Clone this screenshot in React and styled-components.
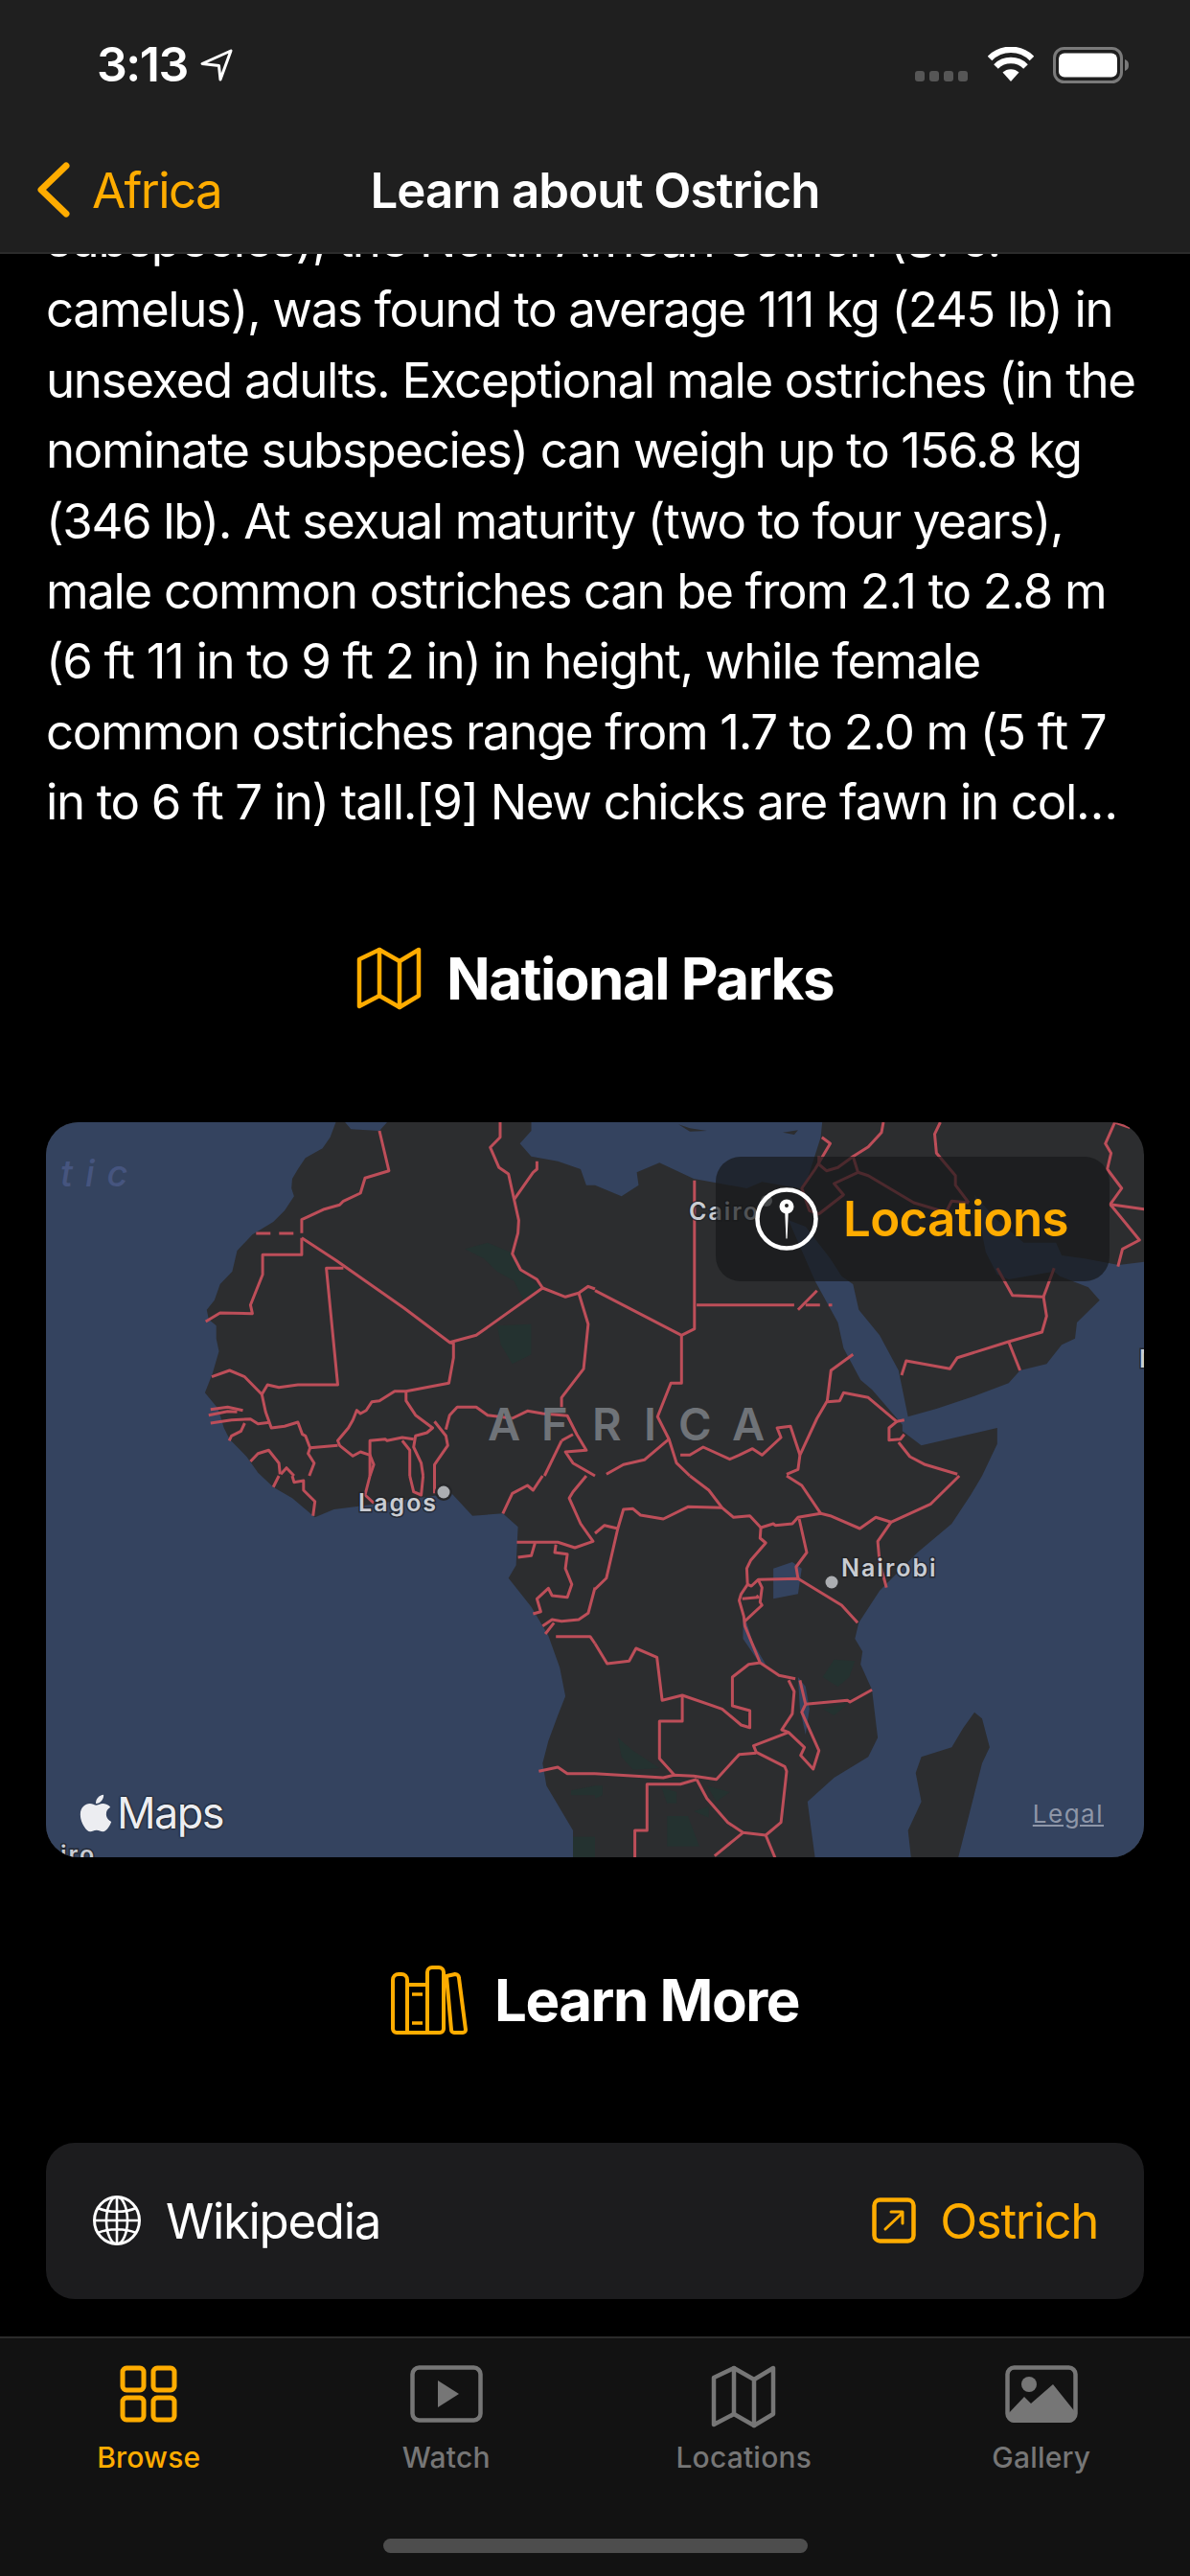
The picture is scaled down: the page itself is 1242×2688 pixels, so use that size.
import React from "react";
import styled, { createGlobalStyle } from "styled-components";
import { FaApple } from "react-icons/fa";

const ORANGE = "#ffac00";
const FONT = `Inter, "Liberation Sans", sans-serif`;

const Global = createGlobalStyle`
  html, body { margin: 0; padding: 0; background: #000; }
  * { box-sizing: border-box; }
`;

const Screen = styled.div`
  width: 1242px; height: 2688px; background: #000; color: #fff;
  font-family: ${FONT}; display: flex; flex-direction: column; overflow: hidden;
`;
const NavBar = styled.header`
  flex: 0 0 265px; background: #1f1f1f; border-bottom: 2px solid #2b2b2b;
  position: relative; z-index: 2; display: flex; flex-direction: column;
`;
const StatusBar = styled.div`
  height: 148px; padding: 49px 63px 0 101px; display: flex; justify-content: space-between; align-items: flex-start;
`;
const Clock = styled.div`
  display: flex; align-items: center; gap: 13px; font-size: 50px; line-height: 37px; font-weight: 600; letter-spacing: -1.5px;
`;
const StatusIcons = styled.div`display: flex; align-items: flex-start; gap: 20px;`;
const NavRow = styled.div`
  height: 100px; position: relative; display: flex; align-items: center; justify-content: center;
`;
const BackLink = styled.div`
  position: absolute; left: 39px; top: 0; height: 100%; display: flex; align-items: center; gap: 23px;
  color: ${ORANGE}; font-size: 51px; letter-spacing: -1.6px;
`;
const NavTitle = styled.div`font-size: 51px; font-weight: 600; letter-spacing: -1px;`;

const Scroll = styled.main`flex: 1 1 0; min-height: 0; overflow: hidden; padding: 0 48px;`;
const Article = styled.article`margin-top: -52px;`;
const Line = styled.div`
  font-size: 51px; line-height: 73.4px; white-space: nowrap; letter-spacing: -1.35px;
`;
const SectionTitle = styled.h2`
  margin: ${(p) => p.$top}px 0 0; height: 80px; display: flex; align-items: center; justify-content: center; gap: 26px;
  font-size: 60px; font-weight: 700; letter-spacing: -1.5px;
`;
const MapCard = styled.section`
  margin-top: 110px; height: 767px; border-radius: 34px; overflow: hidden; position: relative; background: #2c2d2f;
`;
const MapArt = styled.svg`display: block; width: 100%; height: 100%;`;
const Label = styled.text`
  font-family: ${FONT}; font-weight: 600; font-size: 25px; letter-spacing: 2px; fill: #c9ccd2;
  paint-order: stroke; stroke: rgba(30,32,36,.7); stroke-width: 3px;
`;
const Continent = styled.text`font-family: ${FONT}; font-weight: 600; font-size: 47px; fill: #6f7378;`;
const Oceanic = styled.text`font-family: ${FONT}; font-style: italic; font-weight: 500; font-size: 38px; letter-spacing: 13px; fill: #46557f;`;
const LocationsBadge = styled.div`
  position: absolute; left: 699px; top: 36px; width: 411px; height: 130px; border-radius: 26px;
  background: rgba(22,23,25,.68); display: flex; align-items: center; gap: 26px; padding-left: 41px;
  color: ${ORANGE}; font-size: 51px; font-weight: 600; letter-spacing: -.7px;
`;
const MapsMark = styled.div`
  position: absolute; left: 30px; bottom: 21px; display: flex; align-items: center; gap: 0;
  color: #ecedf1; font-size: 45px; letter-spacing: -1.6px; line-height: 50px;
  text-shadow: 0 0 2px #111, 0 0 2px #111;
`;
const Legal = styled.div`
  position: absolute; right: 42px; bottom: 30px; color: #8e96a8; font-size: 26px; letter-spacing: 1.5px; text-decoration: underline;
`;
const LinkRow = styled.section`
  margin-top: 109px; height: 163px; border-radius: 30px; background: #1c1c1e; padding: 0 48px 0 49px;
  display: flex; align-items: center; justify-content: space-between; font-size: 51px; letter-spacing: -1.35px;
`;
const LinkSide = styled.div`display: flex; align-items: center; gap: ${(p) => p.$gap}px; color: ${(p) => p.$color};`;

const TabBar = styled.nav`
  flex: 0 0 250px; background: #121212; border-top: 2px solid #2b2b2b; position: relative;
  display: grid; grid-template-columns: repeat(4, 1fr); align-items: start;
`;
const Tab = styled.div`
  padding-top: 28px; display: flex; flex-direction: column; align-items: center; gap: 12px;
  color: ${(p) => (p.$active ? ORANGE : "#767676")}; font-size: 30px; font-weight: 500; letter-spacing: .2px; line-height: 36px;
`;
const TabIcon = styled.div`height: 66px; display: flex; align-items: flex-start; justify-content: center;`;
const HomeBar = styled.div`
  position: absolute; left: 400px; top: 209px; width: 443px; height: 15px; border-radius: 8px; background: #4d4d4d;
`;

/* ---- icons ---- */
const ArrowIcon = () => (
  <svg width="34" height="34" viewBox="0 0 34 34" fill="none" stroke="#fff" strokeWidth="3" strokeLinejoin="round">
    <path d="M32 2 2 15.5l17.5 2L21 32Z" />
  </svg>
);
const Signal = () => (
  <svg width="56" height="37" viewBox="0 0 56 37" fill="#565656">
    {[0, 15, 30, 45].map((x) => <rect key={x} x={x} y="25" width="10" height="11" rx="3" />)}
  </svg>
);
const Wifi = () => (
  <svg width="48" height="37" viewBox="0 0 48 37" fill="none" stroke="#fff" strokeWidth="6.5">
    <path d="M24 36 15.5 26.5a12.5 12.5 0 0 1 17 0Z" fill="#fff" stroke="none" />
    <path d="M8.5 20.5a22 22 0 0 1 31 0" />
    <path d="M2 12a31 31 0 0 1 44 0" />
  </svg>
);
const Battery = () => (
  <svg width="80" height="38" viewBox="0 0 80 38">
    <rect x="1.5" y="1.5" width="70" height="35" rx="10" fill="none" stroke="#7a7a7a" strokeWidth="3" />
    <rect x="6" y="6.5" width="61" height="25" rx="6" fill="#fff" />
    <path d="M75 13c3 1 4 3 4 6s-1 5-4 6Z" fill="#7a7a7a" />
  </svg>
);
const Chevron = () => (
  <svg width="34" height="58" viewBox="0 0 34 58" fill="none" stroke={ORANGE} strokeWidth="7" strokeLinecap="round" strokeLinejoin="round">
    <path d="M30 4 4 29l26 25" />
  </svg>
);
const FoldMap = ({ color, w = 68, h = 66, sw = 4.5 }) => (
  <svg width={w} height={h} viewBox="0 0 68 66" fill="none" stroke={color} strokeWidth={sw} strokeLinejoin="round" strokeLinecap="round">
    <path d="M3 13 24 3l21 12 20-12v48L45 63 24 51 3 62Z" />
    <path d="M24 3v48M45 15v48" />
  </svg>
);
const Books = () => (
  <svg width="82" height="72" viewBox="0 0 82 72" fill="none" stroke={ORANGE} strokeWidth="4" strokeLinejoin="round">
    <path d="M2 15a6 6 0 0 1 6-6h3a6 6 0 0 1 6 6v55H6a4 4 0 0 1-4-4Z" />
    <path d="M17 20h21v50H17Z" />
    <path d="M38 7a5 5 0 0 1 5-5h7a5 5 0 0 1 5 5v59a4 4 0 0 1-4 4H38Z" />
    <path d="M60 11l9-2a4 4 0 0 1 4 4l7 54a3 3 0 0 1-3 3h-9a3 3 0 0 1-3-3Z" transform="translate(-2 0)" />
    <path d="M22 30h11M22 60h11" strokeWidth="3.5" />
  </svg>
);
const PinIcon = () => (
  <svg width="66" height="66" viewBox="0 0 66 66" fill="none">
    <circle cx="33" cy="33" r="30.5" stroke="#fff" strokeWidth="4.5" />
    <circle cx="33" cy="20" r="7.5" fill="#fff" />
    <circle cx="33" cy="19" r="2" fill="#222" />
    <path d="M31.2 25h3.6L33.6 53a.6.6 0 0 1-1.2 0Z" fill="#fff" />
  </svg>
);
const Globe = () => (
  <svg width="50" height="52" viewBox="0 0 50 52" fill="none" stroke="#fff" strokeWidth="2.6">
    <ellipse cx="25" cy="26" rx="23.5" ry="24.5" strokeWidth="3" />
    <ellipse cx="25" cy="26" rx="11" ry="24.5" />
    <path d="M25 1.5v49M1.5 26h47M5 13c11 5 29 5 40 0M5 39c11-5 29-5 40 0" />
  </svg>
);
const External = () => (
  <svg width="46" height="48" viewBox="0 0 46 48" fill="none" stroke={ORANGE} strokeWidth="4.5" strokeLinecap="round" strokeLinejoin="round">
    <rect x="2.5" y="2.5" width="41" height="43" rx="6" />
    <path d="M14 33 32 16M20 15h12v12" strokeWidth="3" />
  </svg>
);
const GridTab = () => (
  <svg width="60" height="60" viewBox="0 0 60 60" fill="none" stroke={ORANGE} strokeWidth="5">
    <rect x="3" y="3" width="22" height="23" rx="4" />
    <rect x="35" y="3" width="22" height="23" rx="4" />
    <rect x="3" y="34" width="22" height="23" rx="4" />
    <rect x="35" y="34" width="22" height="23" rx="4" />
  </svg>
);
const WatchTab = () => (
  <svg width="76" height="60" viewBox="0 0 76 60" fill="none" stroke="#767676" strokeWidth="4.5">
    <rect x="2.5" y="2.5" width="71" height="55" rx="7" />
    <path d="M29 16 51 30 29 44Z" fill="#767676" stroke="none" />
  </svg>
);
const GalleryTab = () => (
  <svg width="76" height="60" viewBox="0 0 76 60" fill="none" stroke="#767676" strokeWidth="4.5">
    <rect x="2.5" y="2.5" width="71" height="55" rx="7" />
    <path d="M2 52 20 33l7 7 23-20 24 30v3a7 7 0 0 1-7 7H9a7 7 0 0 1-7-7Z" fill="#767676" stroke="none" />
    <ellipse cx="25" cy="20" rx="8" ry="8" fill="#767676" stroke="none" />
  </svg>
);

/* ---- map data: points are read per quadrant of the map, converted below ---- */
const ORIGIN = { A: [0, 1140], B: [621, 1140], C: [0, 1540], D: [621, 1540] };
const conv = (tile, s) =>
  s.trim().split(/\s+/).map((p) => {
    const [x, y] = p.split(",").map(Number);
    return `${(ORIGIN[tile][0] + x * (621 / 1568)).toFixed(1)},${(ORIGIN[tile][1] + y / 3).toFixed(1)}`;
  });
const poly = (segs) => segs.flatMap(([t, s]) => conv(t, s)).join(" ");

const WATER = [
  [["A", "60,60 885,60 885,93 870,140 850,175 805,205 785,240 770,270 768,300 775,325 750,370 720,405 665,445 625,495 612,560 580,600 565,650 545,680 550,710 570,730 570,770 577,810 560,880 540,940 575,990 590,1050 605,1085 650,1140 680,1190"],
   ["C", "720,35 770,70 830,130 880,105 945,95 1100,70 1190,55 1245,125 1325,118 1365,160 1360,280 1340,320 1400,410 1445,500 1475,600 1490,690 1470,750 1445,830 1430,900 1440,970 1510,1110 1510,1230 60,1230"]],
  [["A", "900,80 925,115 1000,120 1030,80"]],
  [["A", "1400,80 1400,120 1370,160 1400,200 1470,215 1530,240 1545,290"],
   ["B", "0,290 70,325 115,290 110,250 170,220 260,270 400,300 440,280 540,300 560,270 595,140 600,80"]],
  [["B", "510,400 580,590 640,720 655,800 700,900 730,930 810,1040 810,1060 860,1105 1060,1050 1060,1100 1020,1200"],
   ["D", "1020,0 990,60 940,150 850,240 750,360 695,460 685,510 705,550 700,590 730,670 745,820 720,880 630,945 560,1020 580,1197 580,1230 1500,1230"],
   ["B", "1500,530 1447,530 1380,540 1290,520 1230,510 1215,470 1130,470 1060,400 1000,320 1030,500 1060,570 1090,585 1210,560 1225,575 1300,610 1330,650 1270,720 1265,770 1230,790 1190,850 1120,870 1090,910 1000,950 900,990 825,1015 800,870 750,760 695,680 680,600 650,575 620,520 555,420"]],
];
const MADAGASCAR = [["D", "1000,740 1020,760 1040,850 1020,900 950,1230 836,1230 825,1110 860,1020 845,930 860,880 940,850 970,790"]];
const LAKES = [
  ["D", "470,290 520,270 545,290 535,370 470,385"],
  ["D", "390,440 400,460 415,520 450,590 430,580 390,510"],
  ["D", "535,630 555,660 565,730 555,810 540,730"],
  ["B", "220,100 250,112 295,120 250,122"],
  ["B", "495,125 535,118 525,132"],
];
const PARKS = [
  ["A", "1225,490 1285,470 1345,500 1370,560 1425,610 1380,650 1355,590 1310,560 1275,520"],
  ["A", "1310,730 1400,725 1400,820 1350,850 1320,790"],
  ["D", "630,575 685,580 670,630 640,660 600,630"],
  ["D", "600,730 670,710 630,750"],
  ["D", "60,820 100,860 170,915 100,920 70,880"],
  ["D", "295,970 355,990 320,1020"],
  ["D", "190,1065 245,1065 275,1160 190,1160"],
  ["D", "0,970 20,970 20,1000 0,1010"],
  ["D", "175,975 215,990 215,1025 190,1025"],
  ["D", "260,1050 300,1035 300,1070"],
  ["C", "1505,985 1568,970 1568,1000 1505,1000"],
  ["C", "1510,1130 1568,1130 1568,1230 1510,1230"],
];
const BORDERS = [
  ["A", "1000,120 1025,245 962,268 950,315 905,340 895,352 855,365 795,398 795,440"],
  ["A", "795,455 795,508 692,508 692,570 660,665 665,692 580,690 542,717"],
  ["A", "795,455 885,525 1065,675 1185,782 1255,760 1430,612 1490,640 1525,628 1550,607 1568,615"],
  ["A", "905,550 860,550 890,915 785,915 735,923 705,915 690,945 645,890 605,870 558,890"],
  ["A", "1185,782 1195,785 1195,830 1183,910 1070,935 1040,935 1000,965 980,968 965,995 950,1005 940,995 930,1025 918,1050 890,1090 895,1105 930,1138 950,1125 975,1135 985,1165 975,1200"],
  ["A", "1318,93 1318,140 1292,172 1315,235 1340,255 1355,335 1367,400 1365,440 1350,505 1372,555 1415,585 1430,612"],
  ["A", "1415,215 1415,240 1405,250 1355,335"],
  ["A", "1525,628 1550,725 1538,865 1480,955 1480,985"],
  ["A", "690,945 700,1000 715,1050 750,1045 785,1032 797,1070 805,1075 817,1112 890,1105"],
  ["A", "817,1112 812,1130 828,1160 815,1200"],
  ["A", "660,1155 680,1130 708,1120 735,1160 738,1195"],
  ["A", "740,1195 755,1175 775,1200"],
  ["A", "555,992 600,985 640,995"],
  ["A", "550,1010 600,998 625,1000"],
  ["A", "555,1035 610,1025 660,1022 680,1037 710,1033"],
  ["A", "645,1035 635,1060 610,1075 604,1090"],
  ["A", "1070,935 1070,965 1095,1010 1140,1050 1125,1065 1095,1075 1090,1110 1110,1160 1115,1200"],
  ["A", "1145,1030 1175,1075 1180,1105 1145,1165 1145,1200"],
  ["A", "975,1200 975,1090 1015,1085 1020,1090 1060,1080 1090,1085"],
  ["A", "1060,1090 1080,1120 1080,1200"],
  ["A", "1175,1055 1185,1010 1205,985 1255,985 1285,1010 1350,1020 1390,997 1430,1005 1495,1012 1520,1070 1545,1120 1490,1125 1510,1160 1568,1200"],
  ["A", "1480,1090 1510,1070"],
  ["A", "1480,1090 1435,1200"],
  ["B", "262,275 262,740 228,760 0,620"],
  ["B", "268,665 525,665"],
  ["B", "535,680 585,620"],
  ["B", "228,760 228,910 200,910 165,1015 195,1085 215,1160 250,1200"],
  ["B", "195,1085 130,1150 75,1165 30,1195"],
  ["B", "680,820 622,870 612,965 585,1020 540,1135 535,1180 505,1195"],
  ["B", "612,968 645,965 655,940 720,955 795,1030 775,1050 775,1088 805,1085 815,1070"],
  ["B", "800,1095 830,1140 870,1165 955,1195"],
  ["B", "795,1030 815,1025"],
  ["B", "540,1135 515,1045 480,1050 490,1080 440,1135 415,1115 380,1135 355,1148 285,1110 250,1135 225,1135"],
  ["B", "808,885 820,840 935,865 955,830 1090,780 1178,750 1190,700 1182,640 1100,635 1060,550"],
  ["B", "1090,780 1120,870"],
  ["B", "1182,640 1210,550"],
  ["B", "760,93 755,125 720,170 680,200 640,235 610,245 590,225 590,200"],
  ["B", "680,200 693,250 630,285 655,320 590,380 565,370 545,300 580,240 620,160 598,140"],
  ["B", "693,250 720,260 840,345 925,375 940,340 985,345"],
  ["B", "910,93 895,130 900,190 950,260 950,290 985,345"],
  ["B", "1410,110 1370,93 1345,160 1360,190 1350,240 1388,300 1358,350 1447,365"],
  ["B", "1358,350 1435,462 1390,490 1378,545"],
  ["C", "720,35 735,0"],
  ["C", "770,0 775,20 800,15 800,45 830,80 825,125"],
  ["C", "975,0 962,60 985,85"],
  ["C", "1080,0 1090,50 1110,60 1115,0"],
  ["C", "1145,0 1145,55"],
  ["C", "1325,118 1350,55 1390,30 1405,45 1430,0"],
  ["C", "1545,0 1510,50 1500,70 1530,150 1563,205 1515,225 1470,208 1362,208"],
  ["C", "1410,210 1400,250 1365,255"],
  ["C", "1465,215 1462,240 1495,245 1490,290 1507,340 1495,380 1455,375 1445,352 1415,385 1425,425 1405,432"],
  ["C", "1568,350 1550,430 1525,450 1480,455 1455,450 1430,470"],
  ["C", "1460,460 1437,495"],
  ["C", "1465,503 1555,503 1568,525"],
  ["C", "1420,925 1470,912 1495,932 1568,932"],
  ["D", "250,0 300,45 335,100 365,130 408,125 437,162 470,150 475,155 520,150 535,130 595,118 620,125 698,165 740,130 780,145 885,88 960,0"],
  ["D", "0,180 25,155 60,165 75,105 100,103 120,123 180,135 245,97 335,100"],
  ["D", "505,0 545,30 595,118"],
  ["D", "60,165 30,320 0,355"],
  ["D", "437,162 435,195 450,210 410,265 400,290 402,340 385,370 380,390 392,440 395,470 435,585 485,625 528,635"],
  ["D", "402,340 412,345 430,325 535,322 650,405 692,460"],
  ["D", "535,322 530,285 558,240 538,135"],
  ["D", "780,145 745,205 750,270 768,350"],
  ["D", "430,325 440,350 435,395 440,405 395,455"],
  ["D", "388,385 430,380 425,375"],
  ["D", "435,585 405,590 362,630 362,720 408,735 408,788 385,780 335,730 230,687 177,703 163,568 108,540 90,580 32,588 0,525"],
  ["D", "230,687 230,768 170,768 170,885 208,935"],
  ["D", "540,640 555,715 545,740 590,860 575,918 542,875 552,850 510,803 418,845 425,865 500,910 505,925 490,1085 450,1125 390,1117 350,1085 295,1010 268,950"],
  ["D", "555,715 665,703 672,708 730,670"],
  ["D", "510,640 525,675 520,745 492,795 510,803"],
  ["D", "425,868 380,872 320,950 260,940 208,937 180,945 0,932"],
  ["D", "268,950 225,965 137,965 137,1110 105,1110 105,1197"],
  ["D", "390,1117 315,1190"],
  ["D", "450,1125 475,1197"],
];
const DASHED = [["A", "675,441 795,441"], ["B", "555,665 625,665"]];

const AfricaMap = () => (
  <MapArt viewBox="48 1171 1146 767" preserveAspectRatio="none">
    {WATER.map((w, i) => <polygon key={i} points={poly(w)} fill="#34435f" />)}
    <polygon points={poly(MADAGASCAR)} fill="#2c2d2f" />
    {PARKS.map(([t, s], i) => <polygon key={i} points={conv(t, s).join(" ")} fill="#243230" />)}
    {LAKES.map(([t, s], i) => <polygon key={i} points={conv(t, s).join(" ")} fill={t === "B" ? "#2c2d2f" : "#34435f"} />)}
    <g fill="none" stroke="#bd4e59" strokeWidth="3" strokeLinejoin="round">
      {BORDERS.map(([t, s], i) => <polyline key={i} points={conv(t, s).join(" ")} />)}
      {DASHED.map(([t, s], i) => <polyline key={i} points={conv(t, s).join(" ")} strokeDasharray="15 9" />)}
    </g>
    <Oceanic x="63" y="1238">tic</Oceanic>
    <Continent x="509 565 618 672 708 764" y="1503">AFRICA</Continent>
    <circle cx="800" cy="1253" r="6" fill="#a9abaf" />
    <Label x="719" y="1273">Cairo</Label>
    <circle cx="463" cy="1557" r="9" fill="#26272a" />
    <circle cx="463" cy="1557" r="6.5" fill="#acaeb2" />
    <Label x="374" y="1577">Lagos</Label>
    <circle cx="868" cy="1651" r="6.5" fill="#acaeb2" />
    <Label x="878" y="1645">Nairobi</Label>
    <Label x="63" y="1944">iro</Label>
    <Label x="1189" y="1427">M</Label>
  </MapArt>
);

const LINES = [
  "subspecies), the North African ostrich (S. c.",
  "camelus), was found to average 111 kg (245 lb) in",
  "unsexed adults. Exceptional male ostriches (in the",
  "nominate subspecies) can weigh up to 156.8 kg",
  "(346 lb). At sexual maturity (two to four years),",
  "male common ostriches can be from 2.1 to 2.8 m",
  "(6 ft 11 in to 9 ft 2 in) in height, while female",
  "common ostriches range from 1.7 to 2.0 m (5 ft 7",
  "in to 6 ft 7 in) tall.[9] New chicks are fawn in col…",
];

export default function App() {
  return (
    <Screen>
      <Global />
      <NavBar>
        <StatusBar>
          <Clock>3:13 <ArrowIcon /></Clock>
          <StatusIcons><Signal /><Wifi /><Battery /></StatusIcons>
        </StatusBar>
        <NavRow>
          <BackLink><Chevron />Africa</BackLink>
          <NavTitle>Learn about Ostrich</NavTitle>
        </NavRow>
      </NavBar>
      <Scroll>
        <Article>{LINES.map((l) => <Line key={l}>{l}</Line>)}</Article>
        <SectionTitle $top={107}><FoldMap color={ORANGE} />National Parks</SectionTitle>
        <MapCard>
          <AfricaMap />
          <LocationsBadge><PinIcon />Locations</LocationsBadge>
          <MapsMark><FaApple size={44} />Maps</MapsMark>
          <Legal>Legal</Legal>
        </MapCard>
        <SectionTitle $top={109}><Books />Learn More</SectionTitle>
        <LinkRow>
          <LinkSide $gap={26} $color="#fff"><Globe />Wikipedia</LinkSide>
          <LinkSide $gap={25} $color={ORANGE}><External />Ostrich</LinkSide>
        </LinkRow>
      </Scroll>
      <TabBar>
        <Tab $active><TabIcon><GridTab /></TabIcon>Browse</Tab>
        <Tab><TabIcon><WatchTab /></TabIcon>Watch</Tab>
        <Tab><TabIcon><FoldMap color="#767676" sw={4.5} /></TabIcon>Locations</Tab>
        <Tab><TabIcon><GalleryTab /></TabIcon>Gallery</Tab>
        <HomeBar />
      </TabBar>
    </Screen>
  );
}
